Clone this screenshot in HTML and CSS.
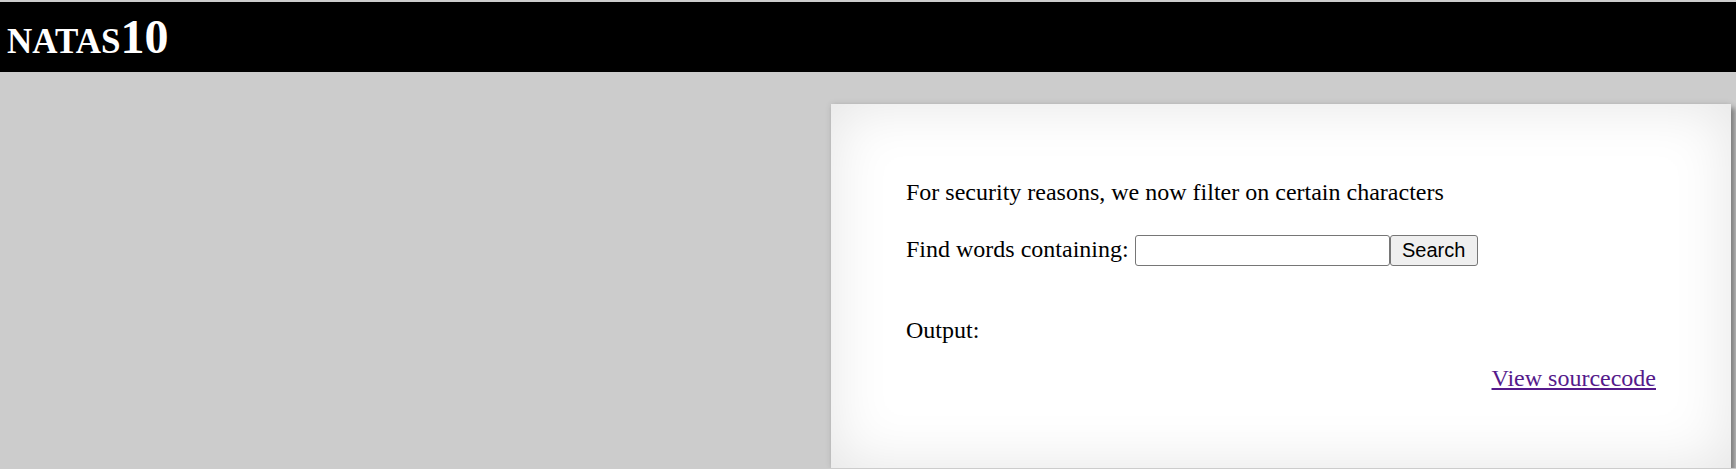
FILE: index.html
```html
<!DOCTYPE html>
<html>
<head>
<meta charset="utf-8">
<title>natas10</title>
<link rel="stylesheet" href="styles.css">
</head>
<body>
<h1 class="title"><span class="caps">natas</span>10</h1>
<div class="content">
<div class="line">For security reasons, we now filter on certain characters</div>
<div class="blank"></div>
<form class="search">
<span class="label">Find words containing: </span><input class="needle" name="needle"><button class="submit" type="button">Search</button>
</form>
<div class="output">Output:</div>
<div class="viewsource"><a href="#" class="srclink">View sourcecode</a></div>
</div>
</body>
</html>
```
FILE: styles.css
```css
html, body {
  margin: 0;
  padding: 0;
}
body {
  background: #cccccc;
  font-family: "Liberation Serif", "Times New Roman", serif;
  font-size: 24px;
  color: #000;
  padding-top: 2px;
}
.title {
  margin: 0;
  background: #000;
  color: #fff;
  font-family: "Liberation Serif", "Times New Roman", serif;
  font-size: 48px;
  font-weight: bold;
  line-height: 55px;
  height: 55px;
  padding: 7px 7px 8px 7px;
}
.caps {
  text-transform: uppercase;
  font-size: 35px;
  line-height: 0;
}
.content {
  width: 750px;
  margin: 32px 5px 0 auto;
  padding: 75px 75px 76px 75px;
  background: #fff;
  box-shadow: 4px 4px 5px #808080, 0 0 6px rgba(0,0,0,0.12), inset 0 0 60px #e4e4e4;
  line-height: 27.5px;
}
.line {
  height: 27.5px;
}
.blank {
  height: 27.5px;
}
.search {
  margin: 0;
  display: flex;
  align-items: center;
  height: 32px;
}
.label {
  white-space: pre;
}
.needle {
  box-sizing: border-box;
  width: 255px;
  height: 31px;
  margin: 0;
  border: 1px solid #767676;
  border-radius: 3px;
  background: #fff;
  padding: 1px 3px;
  font-family: "Liberation Sans", Arial, sans-serif;
  font-size: 20px;
}
.submit {
  box-sizing: border-box;
  width: 88px;
  height: 31px;
  margin: 0;
  border: 1px solid #767676;
  border-radius: 3px;
  background: #efefef;
  color: #000;
  font-family: "Liberation Sans", Arial, sans-serif;
  font-size: 20px;
  padding: 0 6px;
}
.output {
  margin-top: 51px;
  height: 27.5px;
}
.viewsource {
  margin-top: 20px;
  text-align: right;
  height: 27.5px;
}
.srclink {
  color: #551a8b;
  text-decoration: underline;
}
```
